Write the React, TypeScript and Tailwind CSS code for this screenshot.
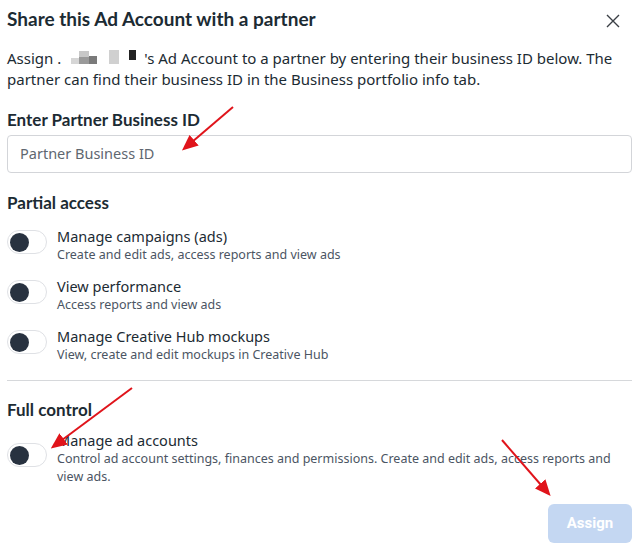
import React from "react";

const body = { fontFamily: '"Noto Sans", "Open Sans", sans-serif' };
const head = { fontFamily: 'Lato, "Noto Sans", sans-serif' };

function Toggle() {
  return (
    <div className="w-[40px] h-[24px] shrink-0 rounded-full border border-[#dfe1e5] bg-white flex items-center pl-[2px]">
      <div className="w-[19px] h-[19px] rounded-full bg-[#283240]" />
    </div>
  );
}

function Option({ title, desc, top = 4 }: { title: string; desc: string; top?: number }) {
  return (
    <div className="flex gap-[10px] items-start">
      <div className={top === 4 ? "pt-[4px]" : "pt-[13px]"}>
        <Toggle />
      </div>
      <div className="pr-[14px]">
        <div className="text-[14.5px] leading-[20px] text-[#1c2b33]">{title}</div>
        <div className="text-[12.5px] leading-[18px] text-[#4b5563]">{desc}</div>
      </div>
    </div>
  );
}

export default function App() {
  return (
    <div className="relative w-[639px] h-[551px] bg-white overflow-hidden" style={body}>
      <div className="px-[7px] pt-[6px]">
        {/* Header */}
        <div className="flex items-center justify-between">
          <h1 className="text-[19px] leading-[26px] font-bold text-[#1c2b33]" style={head}>
            Share this Ad Account with a partner
          </h1>
          <svg width="14" height="14" viewBox="0 0 14 14" className="mr-[12px] mt-[4px]">
            <path d="M1 1 L13 13 M13 1 L1 13" stroke="#3a3f45" strokeWidth="1.4" />
          </svg>
        </div>

        <p className="mt-[16px] text-[15px] leading-[21px] text-[#1c2b33]">
          <span>Assign .</span>
          <span className="inline-flex items-end align-baseline ml-[10px] mr-[8px]">
            <span className="w-[8px] h-[6px] bg-[#d6d6d6]" />
            <span className="flex flex-col">
              <span className="w-[10px] h-[6px] bg-[#c8c8c8]" />
              <span className="w-[10px] h-[7px] bg-[#9a9a9a]" />
            </span>
            <span className="w-[8px] h-[8px] bg-[#7a7a7a]" />
            <span className="w-[10px] h-[14px] bg-[#d0d0d0] ml-[12px]" />
            <span className="w-[7px] h-[10px] bg-[#222] ml-[10px] self-start" />
          </span>
          's Ad Account to a partner by entering their business ID below. The partner can find
          their business ID in the Business portfolio info tab.
        </p>

        <h2 className="mt-[19px] text-[17px] leading-[22px] font-bold text-[#1c2b33]" style={head}>
          Enter Partner Business ID
        </h2>
        <div className="mt-[4px] h-[38px] rounded-[4px] border border-[#d3d5d9] flex items-center px-[12px]">
          <span className="text-[14.5px] text-[#606770]">Partner Business ID</span>
        </div>

        <h2 className="mt-[19px] text-[17px] leading-[22px] font-bold text-[#1c2b33]" style={head}>
          Partial access
        </h2>
        <div className="mt-[12px] flex flex-col gap-[12px]">
          <Option title="Manage campaigns (ads)" desc="Create and edit ads, access reports and view ads" />
          <Option title="View performance" desc="Access reports and view ads" />
          <Option title="Manage Creative Hub mockups" desc="View, create and edit mockups in Creative Hub" />
        </div>

        <div className="mt-[16px] h-px bg-[#d6d8db]" />

        <h2 className="mt-[18px] text-[17px] leading-[22px] font-bold text-[#1c2b33]" style={head}>
          Full control
        </h2>
        <div className="mt-[9px]">
          <Option
            top={13}
            title="Manage ad accounts"
            desc="Control ad account settings, finances and permissions. Create and edit ads, access reports and view ads."
          />
        </div>

        <div className="mt-[18px] flex justify-end">
          <button className="w-[84px] h-[39px] rounded-[6px] bg-[#c4d7f2] text-white text-[15px] font-bold" style={{ fontFamily: "Roboto, sans-serif" }}>
            Assign
          </button>
        </div>
      </div>

      {/* red annotation arrows */}
      <svg className="absolute inset-0 pointer-events-none" width="639" height="551">
        <defs>
          <marker id="ah" markerWidth="8" markerHeight="7" refX="6" refY="3.5" orient="auto">
            <path d="M0 0 L8 3.5 L0 7 Z" fill="#e0141b" />
          </marker>
        </defs>
        <line x1="233" y1="107" x2="185" y2="148" stroke="#e0141b" strokeWidth="2" markerEnd="url(#ah)" />
        <line x1="132" y1="388" x2="54" y2="446" stroke="#e0141b" strokeWidth="2" markerEnd="url(#ah)" />
        <line x1="502" y1="440" x2="548" y2="493" stroke="#e0141b" strokeWidth="2" markerEnd="url(#ah)" />
      </svg>
    </div>
  );
}
